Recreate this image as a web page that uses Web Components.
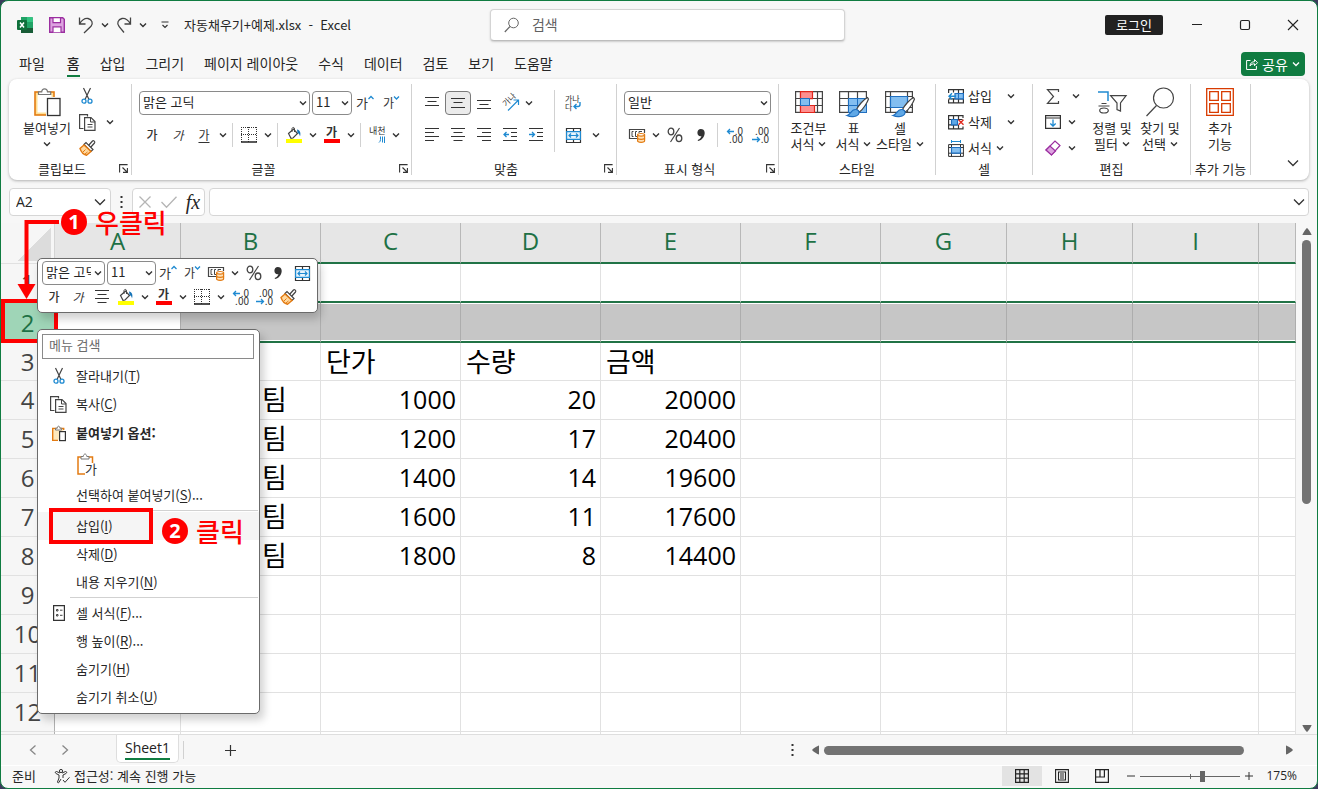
<!DOCTYPE html>
<html lang="ko">
<head>
<meta charset="utf-8">
<title>자동채우기+예제.xlsx - Excel</title>
<style>
    html, body {
        margin: 0;
        height: 100%;
        background: #3b3a5c;
    }
    body {
        font: 13px/16px "Noto Sans CJK KR", "Open Sans", sans-serif;
        color: #262626;
    }
</style>
</head>
<body>
<excel-window></excel-window>

<script>
// name: [width, height, svg content]
const ICONS = {
    chev: [8, 6, '<path d="M1 1.5 4 4.5 7 1.5" stroke="#333" stroke-width="1.4"/>'],
    chevWhite: [8, 6, '<path d="M1 1.5 4 4.5 7 1.5" stroke="#fff" stroke-width="1.3"/>'],
    chevBig: [12, 8, '<path d="M1 1.5 6 6.5 11 1.5" stroke="#333" stroke-width="1.3"/>'],
    excel: [16, 16, '<path d="M4 0h11l1 1v15H4z" fill="#185c37"/><path d="M4 0h6v5H4z" fill="#21a366"/><path d="M10 0h5l1 1v4h-6z" fill="#33c481"/><path d="M4 5h6v5H4z" fill="#107c41"/><path d="M10 5h6v6h-6z" fill="#21a366"/><rect y="3" width="10" height="10" rx="1" fill="#0f703b"/><path d="M3 5.500 7 10.500M7 5.500 3 10.500" stroke="#fff" stroke-width="1.500"/>'],
    save: [16, 16, '<path d="M.7.700h13l1.600 1.600v13H.7z" fill="#dda3e0" stroke="#9b2fa0" stroke-width="1.400"/><path d="M4 .700h7.500v5H4zM4 15.300v-5.500h8v5.500" fill="#fff" stroke="#9b2fa0" stroke-width="1.200"/>'],
    undo: [16, 16, '<path d="M1.500.500v6.500h6M1.500 6.800C4 3 7 1 10 1.500c4 .7 5.500 5 3 7.800L6 16" stroke="#444" stroke-width="1.300"/>'],
    redo: [16, 16, '<path d="M14.500.500v6.500h-6M14.500 6.800C12 3 9 1 6 1.500 2 2.200.5 6.500 3 9.300L8 15.500" stroke="#444" stroke-width="1.300"/>'],
    custom: [8, 8, '<path d="M.5 1h7M1.500 4 4 6.500 6.500 4" stroke="#333" stroke-width="1.200"/>'],
    search: [16, 16, '<circle cx="9.500" cy="6" r="4.800" stroke="#666"/><path d="M6 9.500.800 15" stroke="#666" stroke-width="1.200"/>'],
    minimize: [12, 12, '<path d="M1 5.500h10" stroke="#222"/>'],
    maximize: [12, 12, '<rect x="1.500" y="1.500" width="9" height="9" rx="1.500" stroke="#222" stroke-width="1.200"/>'],
    close: [12, 12, '<path d="m1 1 10 10M11 1 1 11" stroke="#222" stroke-width="1.100"/>'],
    share: [12, 12, '<path d="M4.500 2.500H.6v9h9.800V8M4 8c.3-3 2-4.300 4.500-4.300V1.500l3 3.200-3 3V5.800C6.500 5.700 5 6.500 4 8z" stroke="#fff"/>'],
    paste: [28, 30, '<rect x="2" y="5" width="19" height="23" fill="#ffdf94" stroke="#e37b12" stroke-width="1.600"/><rect x="4.500" y="7.500" width="14" height="18" fill="#fff"/><path d="M5.500 7.500V4.800h3.200c.3-4 5.500-4 5.800 0h3.200v2.700z" fill="#fff" stroke="#777" stroke-width="1.200"/><rect x="14.500" y="11.500" width="12.500" height="17" fill="#fff" stroke="#fff" stroke-width="3"/><rect x="14.500" y="11.500" width="12.500" height="17" fill="#fff" stroke="#333" stroke-width="1.300"/>'],
    cut: [12, 16, '<path d="M2.500 0 8 11.500M9.500 0 4 11.500" stroke="#444" stroke-width="1.200"/><circle cx="3" cy="13.200" r="2" stroke="#1f8ad1" stroke-width="1.300"/><circle cx="9" cy="13.200" r="2" stroke="#1f8ad1" stroke-width="1.300"/>'],
    copy: [17, 17, '<path d="M4.500 14.500H.6V.600h7.900v2" stroke="#444" stroke-width="1.200"/><path d="M5.600 3.600h6.400l4 4v8.800H5.600z" fill="#fff" stroke="#444" stroke-width="1.200"/><path d="M11.500 3.600v4.400H16M8.500 10.500h5M8.500 13h5" stroke="#444"/>'],
    brush: [17, 16, '<path d="m9 6 4.500-5c1-1 3 .8 2 2l-4.500 5" fill="#fff" stroke="#444" stroke-width="1.200"/><path d="m5 4.500 2-2 7 7-2 2z" fill="#fff" stroke="#444" stroke-width="1.200"/><path d="m5 5-4 3.500c1 3 3.500 6 6.500 6.800L12 11.500z" fill="#ffd9a0" stroke="#e37b12" stroke-width="1.400"/><path d="m4 12 2.500-2.500M6 14l2.500-2" stroke="#e37b12"/>'],
    launcher: [9, 9, '<path d="M.6 8.500V.600h8M3.500 3.500l4.500 4.500M8.400 4v4.400H4" stroke="#333" stroke-width="1.100"/>'],
    grow: [18, 16, '<text x="0" y="13" font-size="13">가</text><path d="m12.500 4 2.500-2.500L17.500 4" stroke="#1f8ad1" stroke-width="1.300"/>'],
    shrink: [18, 16, '<text x="1" y="13" font-size="12">가</text><path d="m12 1.500 2.500 2.500 2.500-2.500" stroke="#1f8ad1" stroke-width="1.300"/>'],
    border: [16, 16, '<path d="M.5 0v15M7.500 0v15M15.500 0v15M0 .500h16M0 7.500h16" stroke="#333" stroke-dasharray="1 1"/><path d="M0 15h16" stroke="#222" stroke-width="1.600"/>'],
    fill: [16, 16, '<path d="m2.500 6.500 5-4.500 4 4.500-4.500 4.500-2 .300z" fill="#fff" stroke="#444" stroke-width="1.200"/><path d="M6 5V1.500C6.500 0 8.500 0 8.500 2v3" stroke="#444"/><path d="M11 2.500c3 .3 4 3.500 3 7-.3-2-1-3-2.500-3.500z" fill="#1674b8"/><path d="M0 12h16v4H0z" fill="#ff0"/>'],
    fontcolor: [16, 16, '<text x="2" y="10" font-size="12" font-weight="700">가</text><path d="M0 12h16v4H0z" fill="#f00"/>'],
    ruby: [17, 18, '<text x="0" y="8" font-size="9">내천</text><path d="M11.500 10.500v3q0 2-1.500 3M13.500 10.500v6M15.500 10.500v6.500" stroke="#1f8ad1"/>'],
    alignTop: [14, 14, '<path d="M0 1.500h14M2.500 5.500h9M0 9.500h14" stroke="#333"/>'],
    alignMiddle: [14, 14, '<path d="M0 2.500h14M2.500 6.500h9M0 11.500h14" stroke="#333"/>'],
    alignBottom: [14, 14, '<path d="M0 4.500h14M2.500 8.500h9M0 12.500h14" stroke="#333"/>'],
    left: [14, 14, '<path d="M0 .500h14M0 4.500h9M0 8.500h14M0 12.500h9" stroke="#333"/>'],
    center: [14, 14, '<path d="M0 .500h14M2.500 4.500h9M0 8.500h14M2.500 12.500h9" stroke="#333"/>'],
    right: [14, 14, '<path d="M0 .500h14M5 4.500h9M0 8.500h14M5 12.500h9" stroke="#333"/>'],
    outdent: [14, 14, '<path d="M0 .500h14M8 4.500h6M8 8.500h6M0 12.500h14" stroke="#333"/><path d="M6 6.500H1M3.500 4 1 6.500 3.500 9" stroke="#1f8ad1" stroke-width="1.300"/>'],
    indent: [14, 14, '<path d="M0 .500h14M8 4.500h6M8 8.500h6M0 12.500h14" stroke="#333"/><path d="M0 6.500h5M3 4l2.500 2.500L3 9" stroke="#1f8ad1" stroke-width="1.300"/>'],
    orient: [17, 16, '<text font-size="8" transform="translate(4 12) rotate(-45)">가나</text><path d="M6 15.500 16 5.500M11.500 5h5v5" stroke="#1f8ad1" stroke-width="1.200"/>'],
    wrap: [16, 17, '<text font-size="8"><tspan x="0" y="7">가나</tspan><tspan x="0" y="15">다</tspan></text><path d="M15 7v2.500c0 1.500-1 2-2 2H9M11.500 9 9 11.500l2.500 2.500" stroke="#1f8ad1" stroke-width="1.400"/>'],
    merge: [15, 15, '<path d="M.5.500h14v14H.5zM7.500.500v3M7.500 11.500v3" stroke="#333" stroke-width="1.200"/><path d="M.6 3.600h13.800v7.800H.6z" fill="#e8f4fc" stroke="#1f8ad1" stroke-width="1.200"/><path d="M3 7.500h9M5 5.500l-2 2 2 2M10 5.500l2 2-2 2" stroke="#1f8ad1" stroke-width="1.200"/>'],
    currency: [17, 16, '<path d="M8.500 11.500h-8v-9h15V6" stroke="#444" stroke-width="1.200"/><path d="M4.500 4.500H3v5h1.500M8 4.500H6.500v5H8M10 6V4.500h3" stroke="#444"/><path d="M8.600 7.800v6c0 2 7 2 7 0v-6" fill="#ffe2b8" stroke="#e37b12" stroke-width="1.200"/><ellipse cx="12.100" cy="7.800" rx="3.500" ry="1.300" fill="#fff" stroke="#e37b12" stroke-width="1.200"/><path d="M8.600 11c0 1.800 7 1.800 7 0" stroke="#e37b12" stroke-width="1.200"/>'],
    percent: [16, 16, '<ellipse cx="4" cy="4.500" rx="2.800" ry="3.300" stroke="#444" stroke-width="1.300"/><ellipse cx="12" cy="11.300" rx="2.800" ry="3.300" stroke="#444" stroke-width="1.300"/><path d="M12.500 1 3.500 15" stroke="#444" stroke-width="1.200"/>'],
    comma: [8, 14, '<path d="M3.800 1c4.500 0 4.800 5 2.600 8.200C5.200 11 3.500 12.500 1 13l-.3-1C3 11 4.200 9.500 4.400 8 2.500 8.800.4 7.300.4 4.700.4 2.600 1.800 1 3.800 1z" fill="#333"/>'],
    incDec: [16, 17, '<text font-size="10" text-anchor="end"><tspan x="17" y="8">.0</tspan><tspan x="17" y="16">.00</tspan></text><path d="M8 4.500H1.500M4 2 1.500 4.500 4 7" stroke="#1f8ad1" stroke-width="1.300"/>'],
    decDec: [16, 17, '<text font-size="10" text-anchor="end"><tspan x="17" y="8">.00</tspan><tspan x="17" y="16">.0</tspan></text><path d="M0 12.500h7M5 10l2.500 2.500L5 15" stroke="#1f8ad1" stroke-width="1.300"/>'],
    condFormat: [28, 28, '<path d="M.6 3.600h26.800v20.800H.6zM.6 10.500h27M.6 17.500h27M22.500 3.600v21M5.500 3.600v21" stroke="#444" stroke-width="1.200"/><path d="M5.500 3.600h12v7h-12zM5.500 17.500h14v7h-14z" fill="#ff8f8f" stroke="#e0261b" stroke-width="1.200"/><path d="M5.500 10.500h9v7h-9z" fill="#83bef0" stroke="#1f6fc0"/>'],
    tableFormat: [30, 28, '<path d="M.6 3.600h26.800v20.800H.6zM.6 10.500h27M.6 17.500h27M9.500 3.600v21M18.500 3.600v21" stroke="#444" stroke-width="1.200"/><path d="M9.500 10.500h18v14h-18z" fill="#83bef0" stroke="#1f6fc0"/><path d="M9.500 17.500h18M18.500 10.500v14" stroke="#1f6fc0"/><path d="M28.500 9.500c-4 2-9 8-11 12l3 2.500c4-3 8-10 9-13z" fill="#fff" stroke="#444" stroke-width="1.200"/><path d="M16.500 21.500c2 0 4 1.500 3.500 3.500-.8 4-8 4.500-12 2.500 4-.5 3.500-6 8.500-6z" fill="#5fa8e6" stroke="#1f6fc0" stroke-width="1.200"/>'],
    cellStyle: [30, 28, '<path d="M.6 3.600h26.800v20.800H.6zM.6 8.500h27M.6 19.500h27M5.500 3.600v21M22.500 3.600v21" stroke="#444" stroke-width="1.200"/><path d="M5.500 8.500h17v11h-17z" fill="#83bef0" stroke="#1f6fc0" stroke-width="1.200"/><path d="M28.500 9.500c-4 2-9 8-11 12l3 2.500c4-3 8-10 9-13z" fill="#fff" stroke="#444" stroke-width="1.200"/><path d="M16.500 21.500c2 0 4 1.500 3.500 3.500-.8 4-8 4.500-12 2.500 4-.5 3.500-6 8.500-6z" fill="#5fa8e6" stroke="#1f6fc0" stroke-width="1.200"/>'],
    cellInsert: [16, 15, '<path d="M.6 4V.600h14.800v13.300H.6V10.500M.6 9.900h15M5.500.600v3M10.500.600v13.300M5.500 10v4" stroke="#333" stroke-width="1.200"/><path d="M7 4.500h8.400v5.400H7z" fill="#83bef0" stroke="#1f6fc0" stroke-width="1.200"/><path d="M10.500 4.500v5.400" stroke="#1f6fc0"/><path d="M8 7.200H1M4 4.200 1 7.200l3 3" stroke="#1f8ad1" stroke-width="1.400"/>'],
    cellDelete: [16, 15, '<path d="M15 3V.600H.6v3.900h14M.6 4.500v5.400h9M.6 9.900v4H15v-2.500M5.500.600v13.300M10.500.600v3.900M10.500 10v4" stroke="#333" stroke-width="1.200"/><path d="M3.500 4.500h6v5.400h-6z" fill="#5fa8e6" stroke="#1f6fc0" stroke-width="1.200"/><path d="m10.500 4.700 5 5M15.500 4.700l-5 5" stroke="#e0261b" stroke-width="1.300"/>'],
    cellFormat: [16, 17, '<path d="M.6 4.600h14.800v11.800H.6zM.6 7.500h15M.6 13.200h15M3.500 4.600v12M12.500 4.600v12" stroke="#333"/><path d="M3.500 7.500h9v5.700h-9z" fill="#83bef0" stroke="#1f6fc0" stroke-width="1.200"/><path d="M3.500 0v3M12.500 0v3M3.500 1.500h9" stroke="#1f8ad1"/>'],
    sum: [14, 15, '<path d="M12.500 3V.700H1.500L7.500 7.500l-6 6.800h11V12" stroke="#444" stroke-width="1.200"/>'],
    fillDown: [16, 14, '<path d="M.6.600h14.800v12.800H.6zM.6 3h15" stroke="#333" stroke-width="1.200"/><path d="M8 4.500v6.500M5.300 8.500 8 11l2.700-2.500" stroke="#1f8ad1" stroke-width="1.300"/>'],
    eraser: [16, 16, '<path d="m1 10 9-9 5 4.500-8.500 9.500z" fill="#fff" stroke="#9b2fa0" stroke-width="1.200"/><path d="m1 10 4-4 5.500 5-4 4z" fill="#dda3e0" stroke="#9b2fa0" stroke-width="1.200"/>'],
    sortFilter: [30, 28, '<path d="M1 4h10v9" stroke="#1f8ad1" stroke-width="1.500"/><path d="M4.500 15.500h5M1.500 18h11" stroke="#444" stroke-width="1.200"/><ellipse cx="7" cy="22.500" rx="4.300" ry="2.500" stroke="#444" stroke-width="1.200"/><path d="M13.600 7.600h15.500L23.500 15v8l-3.500-1.500V15z" stroke="#444" stroke-width="1.200"/>'],
    find: [30, 30, '<circle cx="18.500" cy="11" r="10" stroke="#444" stroke-width="1.200"/><path d="M11.500 18.500 1.500 29" stroke="#444" stroke-width="1.200"/>'],
    addins: [28, 28, '<path d="M.7.700h26.600v26.600H.7zM3.700 3.700h8.600v8.600H3.700zM15.700 3.700h8.600v8.600h-8.600zM3.700 15.700h8.600v8.600H3.700zM15.700 15.700h8.600v8.600h-8.600z" stroke="#d83b01" stroke-width="1.300"/>'],
    dots: [3, 12, '<path d="M.5 0h2v2h-2zM.5 5h2v2h-2zM.5 10h2v2h-2z" fill="#333"/>'],
    cancel: [12, 12, '<path d="m.5.500 11 11M11.500.500l-11 11" stroke="#b5b5b5" stroke-width="1.300"/>'],
    enter: [16, 12, '<path d="m.5 6 5 5.300L15.500.700" stroke="#b5b5b5" stroke-width="1.300"/>'],
    pasteSmall: [14, 17, '<path d="M6 15.400H.7v-12h11V5" fill="#ffe9bd" stroke="#e37b12" stroke-width="1.400"/><path d="M3.500 5V3.200h1.800c.3-2.800 2.300-2.800 2.600 0h1.800V5z" fill="#fff" stroke="#777"/><rect x="7.600" y="6.600" width="5.800" height="9" fill="#fff" stroke="#333" stroke-width="1.200"/>'],
    pasteText: [20, 23, '<path d="M8 21H1V4h3M12 4h3.500v6" stroke="#e37b12" stroke-width="1.500"/><path d="M4 6V3.500h2.300c.3-3.300 3.200-3.300 3.500 0H12V6z" fill="#fff" stroke="#777"/><text x="8" y="21" font-size="13">가</text>'],
    cellDialog: [12, 16, '<path d="M.6.600h10.800v14.800H.6z" stroke="#333" stroke-width="1.200"/><path d="M3.500 4.500h1.500v1.500H3.500zM3.500 9.500h1.500V11H3.500zM7 5.200h2.500M7 10.300h2.500" stroke="#444"/>'],
    prev: [8, 10, '<path d="M6.500.500 1.500 5l5 4.500" stroke="#888" stroke-width="1.300"/>'],
    next: [8, 10, '<path d="m1.500.500 5 4.500-5 4.500" stroke="#888" stroke-width="1.300"/>'],
    plus: [11, 11, '<path d="M0 5.500h11M5.500 0v11" stroke="#333" stroke-width="1.200"/>'],
    plusSmall: [8, 8, '<path d="M0 4h8M4 0v8" stroke="#333"/>'],
    minusSmall: [8, 8, '<path d="M0 4h8" stroke="#333"/>'],
    a11y: [15, 14, '<circle cx="6" cy="2" r="1.600" stroke="#333"/><path d="M5 4 1.500 2.500C0 2.500 0 4 1 4.500L4 6v3l-1.500 4c0 1 1.300 1 1.500.300L6 10M7 4l3.500-1.500c1.500 0 1.500 1.500.500 2L8 6v3M8 11l2 2.300 4.500-5" stroke="#333"/>'],
    arrowUp: [10, 8, '<path d="M5 0c.6 0 5 6.500 4.500 7h-9C0 6.500 4.400 0 5 0z" fill="#666"/>'],
    arrowDown: [10, 8, '<path d="M5 8c.6 0 5-6.500 4.500-7h-9C0 1.500 4.400 8 5 8z" fill="#666"/>'],
    arrowLeft: [8, 10, '<path d="M0 5C0 4.400 6.500 0 7 .500v9C6.500 10 0 5.600 0 5z" fill="#666"/>'],
    arrowRight: [8, 10, '<path d="M8 5c0-.6-6.500-5-7-4.500v9C1.500 10 8 5.600 8 5z" fill="#666"/>'],
    viewNormal: [14, 14, '<path d="M.6.600h12.800v12.800H.6zM.6 4.800h13M.6 9.200h13M4.800.600v13M9.200.600v13" stroke="#222" stroke-width="1.200"/>'],
    viewPage: [14, 14, '<path d="M.6.600h12.800v12.800H.6zM3.500 3h7v8h-7zM5 5h4M5 7h4M5 9h4" stroke="#222" stroke-width="1.100"/>'],
    viewBreak: [14, 14, '<path d="M.6.600h12.800v12.800H.6zM.6 8h8.800V.600M5 .600V8" stroke="#222" stroke-width="1.200"/>']
};

class XlIcon extends HTMLElement {
    connectedCallback() {
        const [w, h, body] = ICONS[this.getAttribute('name')];
        this.attachShadow({mode: 'open'}).innerHTML = `
            <style>
                :host { display: inline-flex; flex: none; }
                svg { display: block; overflow: visible; }
                text { font-family: "Noto Sans CJK KR", sans-serif; fill: #333; }
            </style>
            <svg width="${w}" height="${h}" viewBox="0 0 ${w} ${h}" fill="none" aria-hidden="true">${body}</svg>
        `;
    }
}
customElements.define('xl-icon', XlIcon);

/** small ribbon button
 * @attr icon: key in ICONS, the slotted text is shown after it
 * @attr label: accessible name
 * @attr on: pressed look
 */
class ToolButton extends HTMLElement {
    connectedCallback() {
        const icon = this.getAttribute('icon');
        this.attachShadow({mode: 'open'}).innerHTML = `
            <style>
                :host { display: inline-flex; flex: none; width: 26px; height: 24px; }
                button {
                    display: flex; flex: 1; align-items: center; justify-content: center; gap: 4px;
                    min-width: 0; padding: 0; border: 1px solid transparent; border-radius: 4px;
                    background: none; font: inherit; color: inherit; white-space: nowrap;
                    box-sizing: border-box;
                }
                button:hover { background: #ececec; }
                :host([on]) button { background: #ebebeb; border-color: #7a7a7a; }
                :host([start]) button { justify-content: flex-start; }
            </style>
            <button type="button" aria-label="${this.getAttribute('label') || this.textContent.trim()}">
                ${icon ? `<xl-icon name="${icon}"></xl-icon>` : ''}<slot></slot>
            </button>
        `;
    }
}
customElements.define('tool-button', ToolButton);

// big ribbon button, icon on top of two lines of text
class BigButton extends HTMLElement {
    connectedCallback() {
        this.attachShadow({mode: 'open'}).innerHTML = `
            <style>
                :host { display: block; flex: none; width: 48px; }
                button {
                    display: flex; flex-direction: column; align-items: center; width: 100%;
                    padding: 0; border: 0; background: none; font: inherit; color: inherit;
                    white-space: nowrap;
                }
                .pic { display: flex; align-items: center; height: 36px; }
                .line { display: flex; align-items: center; justify-content: center; gap: 4px; height: 16px; line-height: 16px; }
            </style>
            <button type="button">
                <span class="pic"><xl-icon name="${this.getAttribute('icon')}"></xl-icon></span>
                <span class="line"><slot></slot></span>
                <span class="line"><slot name="second"></slot>${this.hasAttribute('drop') ? '<xl-icon name="chev"></xl-icon>' : ''}</span>
            </button>
        `;
    }
}
customElements.define('big-button', BigButton);

class ComboBox extends HTMLElement {
    connectedCallback() {
        this.attachShadow({mode: 'open'}).innerHTML = `
            <style>
                :host { display: inline-grid; flex: none; height: 24px; align-items: center; }
                select, xl-icon { grid-area: 1 / 1; }
                select {
                    appearance: none; width: 100%; height: 24px; box-sizing: border-box;
                    padding: 0 13px 2px 3px; border: 1px solid #8a8a8a; border-radius: 4px;
                    background: #fff; font: inherit; color: inherit; overflow: hidden; text-overflow: clip;
                }
                xl-icon { justify-self: end; margin-right: 3px; pointer-events: none; }
            </style>
            <select aria-label="${this.getAttribute('label')}"><option>${this.getAttribute('value')}</option></select>
            <xl-icon name="chev"></xl-icon>
        `;
    }
}
customElements.define('combo-box', ComboBox);

class RibbonGroup extends HTMLElement {
    connectedCallback() {
        this.attachShadow({mode: 'open'}).innerHTML = `
            <style>
                :host {
                    display: flex; flex-direction: column; flex: none; box-sizing: border-box;
                    height: 91px; border-right: 1px solid #d1d1d1;
                }
                .tools { display: flex; height: 78px; }
                footer { display: flex; align-items: center; height: 13px; line-height: 13px; }
                .name { flex: 1; text-align: center; white-space: nowrap; }
                tool-button { width: 16px; height: 13px; }
            </style>
            <div class="tools"><slot></slot></div>
            <footer>
                <span class="name">${this.getAttribute('name')}</span>
                ${this.hasAttribute('launcher') ? `<tool-button icon="launcher" label="${this.getAttribute('name')} 설정"></tool-button>` : ''}
            </footer>
        `;
    }
}
customElements.define('ribbon-group', RibbonGroup);

class TitleBar extends HTMLElement {
    constructor() {
        super();
        this.attachShadow({mode: 'open'}).innerHTML = `
            <style>
                :host { display: grid; grid-template-columns: 37% calc(27% + 2px) 1fr; align-items: center; height: 48px; }
                .quick, .win { display: flex; align-items: center; }
                .quick { padding-left: 16px; }
                .quick tool-button { width: 32px; }
                .quick .drop { width: 12px; }
                .quick .undo { width: 26px; }
                .name { margin-left: 3px; white-space: pre; }
                .search {
                    display: flex; align-items: center; gap: 12px; height: 32px; padding: 0 13px;
                    box-sizing: border-box; margin-left: 2px; background: #fff; border: 1px solid #d4d4d4;
                    border-bottom-color: #bdbdbd; border-radius: 4px; box-shadow: 0 1px 2px #ccc;
                }
                .search input { flex: 1; min-width: 0; padding: 0 0 3px; border: 0; outline: 0; font-family: inherit; font-size: 14px; line-height: 20px; }
                .search input::placeholder { color: #616161; opacity: 1; }
                .win { justify-content: flex-end; }
                .win tool-button { width: 48px; }
                .login { width: 58px; height: 20px; margin-right: 10px; border: 0; border-radius: 2px; background: #222; color: #fff; font: inherit; padding: 0; }
            </style>
            <div class="quick">
                <xl-icon name="excel"></xl-icon>
                <tool-button icon="save" label="저장" style="margin-left: 8px"></tool-button>
                <tool-button class="undo" icon="undo" label="실행 취소"></tool-button>
                <tool-button class="drop" icon="chev" label="실행 취소 목록"></tool-button>
                <tool-button class="undo" icon="redo" label="다시 실행"></tool-button>
                <tool-button class="drop" icon="chev" label="다시 실행 목록"></tool-button>
                <tool-button icon="custom" label="빠른 실행 도구 모음"></tool-button>
                <span class="name">자동채우기+예제.xlsx  -  Excel</span>
            </div>
            <label class="search"><xl-icon name="search"></xl-icon><input type="search" placeholder="검색" aria-label="검색"></label>
            <div class="win">
                <button class="login" type="button">로그인</button>
                <tool-button icon="minimize" label="최소화"></tool-button>
                <tool-button icon="maximize" label="최대화"></tool-button>
                <tool-button icon="close" label="닫기"></tool-button>
            </div>
        `;
    }
}
customElements.define('title-bar', TitleBar);

class RibbonTabs extends HTMLElement {
    constructor() {
        super();
        const tabs = ['파일', '홈', '삽입', '그리기', '페이지 레이아웃', '수식', '데이터', '검토', '보기', '도움말'];
        this.attachShadow({mode: 'open'}).innerHTML = `
            <style>
                :host { display: flex; align-items: center; height: 30px; padding: 0 12px 0 18px; font-size: 14px; }
                nav { display: flex; flex: 1; gap: 20px; }
                button { padding: 0; border: 0; background: none; font: inherit; color: inherit; white-space: nowrap; }
                nav button { height: 26px; line-height: 22px; border-bottom: 2px solid transparent; }
                nav button:first-child { padding-right: 2px; }
                nav .on { border-color: #107c41; font-weight: 500; }
                .share { display: flex; align-items: center; justify-content: center; gap: 4px; width: 64px; height: 24px; border-radius: 4px; background: #107c41; color: #fff; }
            </style>
            <nav>${tabs.map(t => `<button type="button"${t === '홈' ? ' class="on"' : ''}>${t}</button>`).join('')}</nav>
            <button class="share" type="button"><xl-icon name="share"></xl-icon>공유<xl-icon name="chevWhite"></xl-icon></button>
        `;
    }
}
customElements.define('ribbon-tabs', RibbonTabs);

class RibbonBar extends HTMLElement {
    constructor() {
        super();
        this.attachShadow({mode: 'open'}).innerHTML = `
            <style>
                :host {
                    display: flex; margin: 0 8px; padding: 5px 0; height: 91px; background: #fff;
                    border-radius: 8px; box-shadow: 0 1px 3px #b0b0b0; overflow: hidden;
                }
                .col { display: flex; flex-direction: column; gap: 2px; }
                .rows { display: flex; flex-direction: column; gap: 8px; padding-top: 7px; }
                .row { display: flex; align-items: center; height: 24px; }
                .drop { width: 12px; }
                .wide { width: 20px; }
                .mid { width: 45px; }
                .text { width: 58px; }
                .sep { width: 1px; height: 24px; margin: 0 3px; background: #d1d1d1; }
                .tall { height: 62px; margin: 6px 5px 0; }
                u { text-underline-offset: 2px; }
                b { font-weight: 500; }
                .small { font-size: 12px; color: #333; }
                .clip { width: 123px; }
                .font { width: 280px; }
                .align { width: 205px; }
                .num { width: 162px; }
                .style { width: 157px; }
                .cells { width: 97px; }
                .edit { width: 158px; }
                .add { width: 60px; }
                .pad { padding-left: 7px; }
                .pad12 { padding-left: 11px; }
                .end { margin-left: auto; align-self: flex-end; margin-right: 3px; }
            </style>
            <ribbon-group class="clip" name="클립보드" launcher>
                <big-button icon="paste" class="pad12" style="width: 54px">붙여넣기<xl-icon slot="second" name="chev"></xl-icon></big-button>
                <div class="col">
                    <tool-button icon="cut" label="잘라내기"></tool-button>
                    <div class="row"><tool-button icon="copy" label="복사"></tool-button><tool-button class="wide" icon="chev" label="복사 옵션"></tool-button></div>
                    <tool-button icon="brush" label="서식 복사"></tool-button>
                </div>
            </ribbon-group>
            <ribbon-group class="font" name="글꼴" launcher>
                <div class="rows pad">
                    <div class="row">
                        <combo-box label="글꼴" value="맑은 고딕" style="width: 171px; margin-right: 2px"></combo-box>
                        <combo-box label="글꼴 크기" value="11" style="width: 40px"></combo-box>
                        <tool-button icon="grow" label="글꼴 크기 크게"></tool-button>
                        <tool-button icon="shrink" label="글꼴 크기 작게"></tool-button>
                    </div>
                    <div class="row">
                        <tool-button class="small" label="굵게"><b>가</b></tool-button>
                        <tool-button class="small" label="기울임꼴"><i>가</i></tool-button>
                        <tool-button class="small" label="밑줄"><u>가</u></tool-button>
                        <tool-button class="drop" icon="chev" label="밑줄 옵션"></tool-button>
                        <span class="sep"></span>
                        <tool-button icon="border" label="테두리"></tool-button>
                        <tool-button class="drop" icon="chev" label="테두리 옵션"></tool-button>
                        <span class="sep"></span>
                        <tool-button icon="fill" label="채우기 색"></tool-button>
                        <tool-button class="drop" icon="chev" label="채우기 색 옵션"></tool-button>
                        <tool-button icon="fontcolor" label="글꼴 색"></tool-button>
                        <tool-button class="drop" icon="chev" label="글꼴 색 옵션"></tool-button>
                        <span class="sep"></span>
                        <tool-button icon="ruby" label="윗주"></tool-button>
                        <tool-button class="drop" icon="chev" label="윗주 옵션"></tool-button>
                    </div>
                </div>
            </ribbon-group>
            <ribbon-group class="align" name="맞춤" launcher>
                <div class="rows pad">
                    <div class="row">
                        <tool-button icon="alignTop" label="위쪽 맞춤"></tool-button>
                        <tool-button icon="alignMiddle" label="가운데 맞춤" on></tool-button>
                        <tool-button icon="alignBottom" label="아래쪽 맞춤"></tool-button>
                        <tool-button icon="orient" label="방향"></tool-button>
                        <tool-button class="drop" icon="chev" label="방향 옵션"></tool-button>
                    </div>
                    <div class="row">
                        <tool-button icon="left" label="왼쪽 맞춤"></tool-button>
                        <tool-button icon="center" label="가운데 맞춤"></tool-button>
                        <tool-button icon="right" label="오른쪽 맞춤"></tool-button>
                        <tool-button icon="outdent" label="내어쓰기"></tool-button>
                        <tool-button icon="indent" label="들여쓰기"></tool-button>
                    </div>
                </div>
                <span class="sep tall"></span>
                <div class="rows">
                    <div class="row"><tool-button icon="wrap" label="자동 줄 바꿈"></tool-button></div>
                    <div class="row"><tool-button icon="merge" label="병합하고 가운데 맞춤"></tool-button><tool-button class="wide" icon="chev" label="병합 옵션"></tool-button></div>
                </div>
            </ribbon-group>
            <ribbon-group class="num" name="표시 형식" launcher>
                <div class="rows pad">
                    <div class="row"><combo-box label="표시 형식" value="일반" style="width: 147px"></combo-box></div>
                    <div class="row">
                        <tool-button icon="currency" label="회계 표시 형식"></tool-button>
                        <tool-button class="drop" icon="chev" label="회계 옵션"></tool-button>
                        <tool-button icon="percent" label="백분율"></tool-button>
                        <tool-button icon="comma" label="쉼표"></tool-button>
                        <span class="sep"></span>
                        <tool-button icon="incDec" label="자릿수 늘림"></tool-button>
                        <tool-button icon="decDec" label="자릿수 줄임"></tool-button>
                    </div>
                </div>
            </ribbon-group>
            <ribbon-group class="style" name="스타일">
                <big-button class="mid" icon="condFormat" drop style="margin-left: 7px">조건부<span slot="second">서식</span></big-button>
                <big-button class="mid" icon="tableFormat" drop>표<span slot="second">서식</span></big-button>
                <big-button icon="cellStyle" drop>셀<span slot="second">스타일</span></big-button>
            </ribbon-group>
            <ribbon-group class="cells" name="셀">
                <div class="col pad12">
                    <div class="row"><tool-button class="text" icon="cellInsert" start>삽입</tool-button><tool-button class="drop" icon="chev" label="삽입 옵션"></tool-button></div>
                    <div class="row"><tool-button class="text" icon="cellDelete" start>삭제</tool-button><tool-button class="drop" icon="chev" label="삭제 옵션"></tool-button></div>
                    <div class="row"><tool-button class="text" icon="cellFormat" start>서식<xl-icon name="chev"></xl-icon></tool-button></div>
                </div>
            </ribbon-group>
            <ribbon-group class="edit" name="편집">
                <div class="col pad" style="margin-right: 2px">
                    <div class="row"><tool-button icon="sum" label="합계"></tool-button><tool-button class="wide" icon="chev" label="합계 옵션"></tool-button></div>
                    <div class="row"><tool-button icon="fillDown" label="채우기"></tool-button><tool-button class="drop" icon="chev" label="채우기 옵션"></tool-button></div>
                    <div class="row"><tool-button icon="eraser" label="지우기"></tool-button><tool-button class="drop" icon="chev" label="지우기 옵션"></tool-button></div>
                </div>
                <big-button icon="sortFilter" drop>정렬 및<span slot="second">필터</span></big-button>
                <big-button icon="find" drop>찾기 및<span slot="second">선택</span></big-button>
            </ribbon-group>
            <ribbon-group class="add" name="추가 기능">
                <big-button icon="addins" style="width: 58px">추가<span slot="second">기능</span></big-button>
            </ribbon-group>
            <tool-button class="end" icon="chevBig" label="리본 메뉴 축소"></tool-button>
        `;
    }
}
customElements.define('ribbon-bar', RibbonBar);

class FormulaBar extends HTMLElement {
    constructor() {
        super();
        this.attachShadow({mode: 'open'}).innerHTML = `
            <style>
                :host { display: flex; align-items: center; gap: 4px; margin: 8px 8px 7px; height: 28px; }
                .box { display: flex; align-items: center; box-sizing: border-box; height: 28px; background: #fff; border: 1px solid #d6d6d6; border-radius: 4px; }
                input { flex: 1; min-width: 0; padding: 0 6px; border: 0; outline: 0; background: none; font: 14px/20px "Open Sans", sans-serif; color: inherit; }
                .name { width: 102px; padding-right: 4px; }
                .name tool-button { width: 12px; }
                xl-icon { margin: 0 5px; }
                .fx { width: 73px; }
                .fx tool-button { width: 24px; }
                .fx i { font: italic 20px/20px "Liberation Serif", serif; }
                .formula { flex: 1; }
            </style>
            <div class="box name"><input value="A2" aria-label="이름 상자"><tool-button icon="chevBig" label="이름 목록"></tool-button></div>
            <xl-icon name="dots"></xl-icon>
            <div class="box fx"><tool-button icon="cancel" label="취소"></tool-button><tool-button icon="enter" label="입력"></tool-button><tool-button label="함수 삽입"><i>fx</i></tool-button></div>
            <div class="box formula"><input aria-label="수식 입력줄"><tool-button icon="chevBig" label="수식 입력줄 확장" style="width: 18px"></tool-button></div>
        `;
    }
}
customElements.define('formula-bar', FormulaBar);

class SheetGrid extends HTMLElement {
    constructor() {
        super();
        const cols = 'ABCDEFGHI'.split('');
        const widths = [126, 140, 140, 140, 140, 140, 126, 126, 126];
        const data = {
            3: ['', '', '단가', '수량', '금액'],
            4: ['', '팀', 1000, 20, 20000],
            5: ['', '팀', 1200, 17, 20400],
            6: ['', '팀', 1400, 14, 19600],
            7: ['', '팀', 1600, 11, 17600],
            8: ['', '팀', 1800, 8, 14400]
        };
        let rows = '';
        // the last row only shows its top edge
        for (let r = 1; r <= 13; r++) {
            const cells = data[r] || [];
            rows += `<tr class="r${r}"><th scope="row">${r < 13 ? r : ''}</th>`;
            for (let c = 0; c <= cols.length; c++) {
                const v = cells[c] === undefined ? '' : cells[c];
                rows += `<td${typeof v === 'number' ? ' class="n"' : v === '팀' ? ' class="team"' : ''}>${v}</td>`;
            }
            rows += '</tr>';
        }
        this.attachShadow({mode: 'open'}).innerHTML = `
            <style>
                :host { display: flex; flex: 1; min-height: 0; }
                .view { flex: 1; min-width: 0; overflow: hidden; }
                table { width: 100%; table-layout: fixed; border-spacing: 0; background: #fff; }
                th, td {
                    box-sizing: border-box; height: 39px; padding: 0 4px 2px 5px; line-height: 30px;
                    border: 0 solid #e1e1e1; border-width: 0 1px 1px 0; white-space: nowrap;
                }
                td { font-size: 27px; color: #000; }
                td.n { text-align: right; font: 25px/30px "Open Sans", sans-serif; }
                td.team { padding-left: 81px; }
                th { font: 24px/30px "Open Sans", sans-serif; background: #f6f6f6; color: #444; padding: 0; }
                tbody th { border-right-color: #b0b0b0; }
                thead th { height: 41px; background: #e6e6e6; color: #1e7145; border-right-color: #b8b8b8; border-bottom: 2px solid #217346; padding-bottom: 4px; }
                thead th:first-child { background: #f6f6f6; border-right-color: #d5d5d5; border-bottom: 1px solid #e1e1e1; padding: 0; }
                .corner { display: block; width: 33px; height: 33px; margin: 4px 0 2px 17px; background: linear-gradient(135deg, transparent 50%, #dcdcdc 50%); }
                .r1 td { border-bottom: 2px solid #217346; }
                .r2 td { height: 40px; background: #c6c6c6; border-right-color: #adadad; border-bottom: 2px solid #217346; box-shadow: inset 0 1px #fff, inset 0 -1px #fff; }
                .r2 td:nth-child(2) { background: #fff; }
                .r2 th { background: #9fd5b7; color: #1e7145; }
                .r3 td, .r3 th { height: 38px; }
                .scroll { display: flex; flex-direction: column; align-items: center; gap: 4px; width: 21px; padding: 5px 0 2px; }
                .track { flex: 1; }
                .thumb { width: 9px; height: 55%; border-radius: 5px; background: #737373; }
            </style>
            <div class="view">
                <table>
                    <colgroup><col style="width: 54px">${widths.map(w => `<col style="width: ${w}px">`).join('')}<col></colgroup>
                    <thead><tr><th><span class="corner"></span></th>${cols.map(c => `<th scope="col">${c}</th>`).join('')}<th></th></tr></thead>
                    <tbody>${rows}</tbody>
                </table>
            </div>
            <div class="scroll">
                <xl-icon name="arrowUp"></xl-icon>
                <div class="track"><div class="thumb"></div></div>
                <xl-icon name="arrowDown"></xl-icon>
            </div>
        `;
    }
}
customElements.define('sheet-grid', SheetGrid);

class SheetBar extends HTMLElement {
    constructor() {
        super();
        this.attachShadow({mode: 'open'}).innerHTML = `
            <style>
                :host { display: flex; align-items: center; height: 30px; border-top: 1px solid #dedede; border-bottom: 1px solid #fff; }
                .nav { display: flex; padding-left: 16px; width: 99px; box-sizing: border-box; }
                .nav tool-button { width: 32px; }
                .tab { align-self: flex-start; height: 28px; margin-left: 16px; padding: 0 8px; border: 1px solid #dedede; border-top: 0; border-radius: 0 0 5px 5px; background: #fff; font: 14px/22px "Open Sans", sans-serif; color: #222; }
                .tab span { display: block; height: 21px; border-bottom: 2px solid #107c41; }
                .sep { width: 1px; height: 18px; margin: 0 34px 0 4px; background: #d1d1d1; }
                .hscroll { display: flex; align-items: center; gap: 4px; width: 502px; margin: 0 24px 0 auto; }
                .hscroll .dots { margin-right: 14px; }
                .track { flex: 1; }
                .thumb { width: 92%; height: 9px; border-radius: 5px; background: #737373; }
            </style>
            <div class="nav"><tool-button icon="prev" label="이전 시트"></tool-button><tool-button icon="next" label="다음 시트"></tool-button></div>
            <button class="tab" type="button"><span>Sheet1</span></button>
            <span class="sep"></span>
            <tool-button icon="plus" label="새 시트"></tool-button>
            <div class="hscroll">
                <xl-icon class="dots" name="dots"></xl-icon>
                <xl-icon name="arrowLeft"></xl-icon>
                <div class="track"><div class="thumb"></div></div>
                <xl-icon name="arrowRight"></xl-icon>
            </div>
        `;
    }
}
customElements.define('sheet-bar', SheetBar);

class StatusBar extends HTMLElement {
    constructor() {
        super();
        this.attachShadow({mode: 'open'}).innerHTML = `
            <style>
                :host { display: flex; align-items: center; height: 20px; padding: 0 20px 2px 11px; }
                .a11y { width: auto; margin-left: 18px; }
                .views { display: flex; margin-left: auto; }
                .views tool-button { width: 40px; height: 20px; }
                .views .on { background: #e3e3e3; }
                .zoom { width: 18px; }
                input { appearance: none; width: 100px; height: 12px; margin: 0; background: linear-gradient(#666, #666) center / 100% 1px no-repeat, linear-gradient(#666, #666) 50px 50% / 1px 5px no-repeat; }
                input::-webkit-slider-thumb { appearance: none; width: 5px; height: 11px; background: #666; }
                .pct { width: 39px; text-align: right; font: 12px/16px "Open Sans", sans-serif; }
            </style>
            <span>준비</span>
            <tool-button class="a11y" icon="a11y">접근성: 계속 진행 가능</tool-button>
            <div class="views">
                <tool-button class="on" icon="viewNormal" label="기본"></tool-button>
                <tool-button icon="viewPage" label="페이지 레이아웃"></tool-button>
                <tool-button icon="viewBreak" label="페이지 나누기 미리 보기"></tool-button>
            </div>
            <tool-button class="zoom" icon="minusSmall" label="축소"></tool-button>
            <input type="range" min="0" max="100" value="63" aria-label="확대/축소">
            <tool-button class="zoom" icon="plusSmall" label="확대"></tool-button>
            <span class="pct">175%</span>
        `;
    }
}
customElements.define('status-bar', StatusBar);

class MiniToolbar extends HTMLElement {
    constructor() {
        super();
        this.attachShadow({mode: 'open'}).innerHTML = `
            <style>
                :host { display: flex; flex-direction: column; padding: 2px 3px 3px 4px; background: #fff; border: 1px solid #6b6b6b; border-radius: 5px; box-shadow: 3px 6px 8px rgba(0, 0, 0, .18); }
                .row { display: flex; align-items: center; height: 24px; }
                .row tool-button { width: 24px; font-size: 12px; color: #333; }
                .row .drop { width: 14px; }
                b { font-weight: 500; }
            </style>
            <div class="row">
                <combo-box label="글꼴" value="맑은 고딕" style="width: 63px; margin-right: 2px"></combo-box>
                <combo-box label="글꼴 크기" value="11" style="width: 49px"></combo-box>
                <tool-button icon="grow" label="글꼴 크기 크게"></tool-button>
                <tool-button icon="shrink" label="글꼴 크기 작게"></tool-button>
                <tool-button icon="currency" label="회계 표시 형식"></tool-button>
                <tool-button class="drop" icon="chev" label="회계 옵션"></tool-button>
                <tool-button icon="percent" label="백분율"></tool-button>
                <tool-button icon="comma" label="쉼표"></tool-button>
                <tool-button icon="merge" label="병합하고 가운데 맞춤"></tool-button>
            </div>
            <div class="row">
                <tool-button label="굵게"><b>가</b></tool-button>
                <tool-button label="기울임꼴"><i>가</i></tool-button>
                <tool-button icon="center" label="가운데 맞춤"></tool-button>
                <tool-button icon="fill" label="채우기 색"></tool-button>
                <tool-button class="drop" icon="chev" label="채우기 색 옵션"></tool-button>
                <tool-button icon="fontcolor" label="글꼴 색"></tool-button>
                <tool-button class="drop" icon="chev" label="글꼴 색 옵션"></tool-button>
                <tool-button icon="border" label="테두리"></tool-button>
                <tool-button class="drop" icon="chev" label="테두리 옵션"></tool-button>
                <tool-button icon="incDec" label="자릿수 늘림"></tool-button>
                <tool-button icon="decDec" label="자릿수 줄임"></tool-button>
                <tool-button icon="brush" label="서식 복사"></tool-button>
            </div>
        `;
    }
}
customElements.define('mini-toolbar', MiniToolbar);

/** one line of the context menu
 * @attr key: access key shown underlined in brackets
 * @attr dots: adds ... after the key
 */
class MenuItem extends HTMLElement {
    connectedCallback() {
        const icon = this.getAttribute('icon');
        const key = this.getAttribute('key');
        this.attachShadow({mode: 'open'}).innerHTML = `
            <style>
                :host { display: flex; height: 28px; }
                button { display: flex; flex: 1; align-items: center; padding: 0; border: 0; background: none; font: inherit; color: inherit; text-align: left; white-space: nowrap; }
                button:hover, :host([on]) button { background: #f5f5f5; }
                .pic { display: flex; justify-content: center; width: 38px; padding-left: 3px; box-sizing: border-box; }
                u { text-underline-offset: 2px; }
            </style>
            <button type="button" role="menuitem">
                <span class="pic">${icon ? `<xl-icon name="${icon}"></xl-icon>` : ''}</span>
                <span><slot></slot>${key ? `(<u>${key}</u>)` : ''}${this.hasAttribute('dots') ? '...' : ''}</span>
            </button>
        `;
    }
}
customElements.define('menu-item', MenuItem);

class ContextMenu extends HTMLElement {
    constructor() {
        super();
        this.attachShadow({mode: 'open'}).innerHTML = `
            <style>
                :host { display: flex; flex-direction: column; box-sizing: border-box; width: 223px; padding-bottom: 2px; background: #fff; border: 1px solid #6b6b6b; border-radius: 5px; box-shadow: 4px 6px 8px rgba(0, 0, 0, .18); }
                input { height: 25px; margin: 4px 5px 3px 4px; padding: 0 6px 4px; box-sizing: border-box; border: 1px solid #8a8a8a; outline: 0; font-family: inherit; font-size: 13px; }
                input::placeholder { color: #6b6b6b; opacity: 1; }
                hr { width: 188px; height: 1px; margin: 1px 1px 1px auto; border: 0; background: #d1d1d1; }
                .head { height: 30px; font-weight: 700; }
                .opt { display: flex; align-items: center; height: 33px; padding-left: 33px; }
            </style>
            <input type="search" placeholder="메뉴 검색" aria-label="메뉴 검색">
            <menu-item icon="cut" key="T">잘라내기</menu-item>
            <menu-item icon="copy" key="C">복사</menu-item>
            <menu-item class="head" icon="pasteSmall">붙여넣기 옵션:</menu-item>
            <div class="opt"><tool-button icon="pasteText" label="텍스트만 유지" style="width: 32px"></tool-button></div>
            <menu-item key="S" dots>선택하여 붙여넣기</menu-item>
            <hr>
            <menu-item key="I" on>삽입</menu-item>
            <menu-item key="D">삭제</menu-item>
            <menu-item key="N">내용 지우기</menu-item>
            <hr>
            <menu-item icon="cellDialog" key="F" dots>셀 서식</menu-item>
            <menu-item key="R" dots>행 높이</menu-item>
            <menu-item key="H">숨기기</menu-item>
            <menu-item key="U">숨기기 취소</menu-item>
        `;
    }
}
customElements.define('context-menu', ContextMenu);

// numbered red note of the tutorial
class StepNote extends HTMLElement {
    connectedCallback() {
        this.attachShadow({mode: 'open'}).innerHTML = `
            <style>
                :host { display: flex; align-items: center; gap: 8px; color: #f00; font-size: 26px; font-weight: 500; line-height: 28px; white-space: nowrap; pointer-events: none; }
                .num { display: flex; align-items: center; justify-content: center; width: 26px; height: 26px; border-radius: 50%; background: #f00; color: #fff; font: 700 20px/26px "Open Sans", sans-serif; }
            </style>
            <span class="num">${this.getAttribute('step')}</span><slot></slot>
        `;
    }
}
customElements.define('step-note', StepNote);

class ExcelWindow extends HTMLElement {
    constructor() {
        super();
        this.attachShadow({mode: 'open'}).innerHTML = `
            <style>
                :host {
                    display: flex; flex-direction: column; position: relative; box-sizing: border-box;
                    height: 100vh; overflow: hidden; background: #f7f7f7; border: 1px solid #107c41; border-radius: 8px;
                }
                /* popups and notes lie over the sheet */
                mini-toolbar, context-menu, step-note, .mark, .arrow { position: absolute; }
                mini-toolbar { left: 36px; top: 257px; }
                context-menu { left: 36px; top: 328px; }
                .mark { box-sizing: border-box; border: 4px solid #f00; pointer-events: none; }
                .row2 { left: 0; top: 298px; width: 57px; height: 44px; }
                .insert { left: 48px; top: 507px; width: 104px; height: 36px; }
                .arrow { left: 15px; top: 216px; pointer-events: none; }
                .one { left: 60px; top: 207px; }
                .two { left: 161px; top: 516px; }
            </style>
            <title-bar></title-bar>
            <ribbon-tabs></ribbon-tabs>
            <ribbon-bar></ribbon-bar>
            <formula-bar></formula-bar>
            <sheet-grid></sheet-grid>
            <sheet-bar></sheet-bar>
            <status-bar></status-bar>
            <div class="mark row2"></div>
            <mini-toolbar></mini-toolbar>
            <context-menu></context-menu>
            <div class="mark insert"></div>
            <svg class="arrow" width="44" height="84" viewBox="0 0 44 84" aria-hidden="true">
                <path d="M43 5H10.500V70" fill="none" stroke="#f00" stroke-width="4"/>
                <path d="M1.500 67h18l-9 15z" fill="#f00"/>
            </svg>
            <step-note class="one" step="1">우클릭</step-note>
            <step-note class="two" step="2">클릭</step-note>
        `;
    }
}
customElements.define('excel-window', ExcelWindow);
</script>
</body>
</html>
